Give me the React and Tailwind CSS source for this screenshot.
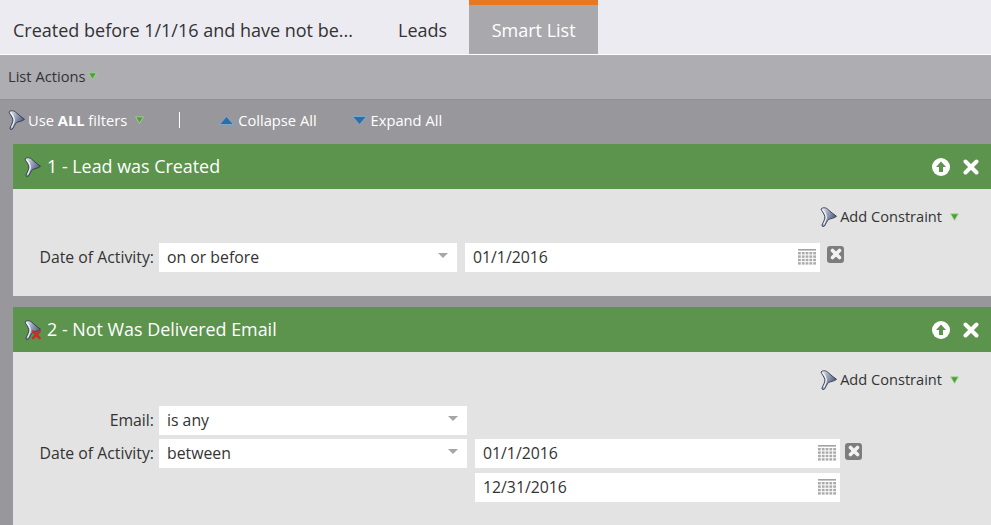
const font = { fontFamily: '"Open Sans", sans-serif' };

function Funnel({ x }) {
  return (
    <svg width="17" height="20" viewBox="0 0 17 20" className="shrink-0">
      <defs>
        <linearGradient id="fg" x1="0" y1="0" x2="1" y2="0.6">
          <stop offset="0" stopColor="#f4f5f8" />
          <stop offset="0.45" stopColor="#9aa5bb" />
          <stop offset="1" stopColor="#46506a" />
        </linearGradient>
      </defs>
      <path d="M1 2 C3 0 6 0.5 8 2.5 C10.5 5 13.5 7 16.5 9.3 C14 11.5 10.5 11.5 8.5 12.5 C7 14 6 16.5 4.5 19 C3.2 20 1.6 19.5 2 18 C3.5 15 5 12 4.8 9.5 C4.3 7 2 4.5 1 2 Z" fill="url(#fg)" stroke="#2f3850" strokeWidth="0.9" />
      <path d="M2.6 2.6 C4.6 4.6 6.2 7 6.4 10 C6.2 12.5 5 15 3.6 17.6" fill="none" stroke="#ffffff" strokeWidth="1.3" opacity="0.85" />
      {x && (
        <g stroke="#c0322b" strokeWidth="2.6" strokeLinecap="round">
          <path d="M9 11.5 L15.5 18" />
          <path d="M15.5 11.5 L9 18" />
        </g>
      )}
    </svg>
  );
}

function GreenCaret() {
  return (
    <svg width="9" height="8" viewBox="0 0 9 8" className="shrink-0">
      <path d="M0.6 0.8 H8.4 L4.5 7.4 Z" fill="#4f9f38" stroke="#a7d89a" strokeWidth="0.8" />
    </svg>
  );
}

function Calendar() {
  return (
    <svg width="18" height="16" viewBox="0 0 18 16" className="shrink-0">
      <rect x="0" y="0" width="18" height="1.6" fill="#a3a3a3" />
      {[3, 6.4, 9.8, 13.2].map((y) =>
        [0, 3.8, 7.6, 11.4, 15.2].map((x) => (
          <rect key={`${x}-${y}`} x={x} y={y} width="2.8" height="2.4" fill="#ababab" />
        ))
      )}
    </svg>
  );
}

function Clear() {
  return (
    <span className="flex h-[17px] w-[17px] items-center justify-center rounded-[3px] bg-[#7d7d7d]">
      <svg width="12" height="12" viewBox="0 0 12 12">
        <path d="M2.5 2.5 L9.5 9.5 M9.5 2.5 L2.5 9.5" stroke="#f2f2f2" strokeWidth="3.6" strokeLinecap="round" />
      </svg>
    </span>
  );
}

function Select({ value, w }) {
  return (
    <div className={`flex h-[29px] items-center justify-between bg-white pl-2 pr-[9px] text-[15.8px] text-[#333] ${w}`}>
      <span>{value}</span>
      <svg width="10" height="5" viewBox="0 0 10 5" className="mb-[3px]">
        <path d="M0 0 H10 L5 5 Z" fill="#a6a6a6" />
      </svg>
    </div>
  );
}

function DateField({ value, w }) {
  return (
    <div className={`flex h-[29px] items-center justify-between bg-white pl-2 pr-[4px] text-[15.8px] text-[#333] ${w}`}>
      <span>{value}</span>
      <Calendar />
    </div>
  );
}

function Label({ children }) {
  return <div className="w-[141px] text-right text-[15.8px] text-[#333]">{children}</div>;
}

function Header({ icon, title }) {
  return (
    <div className="flex h-[45px] items-center bg-[#5c934d] pl-[11px] pr-[12px]">
      {icon}
      <span className="ml-[6px] text-[17.9px] text-white">{title}</span>
      <div className="ml-auto flex items-center gap-[13px]">
        <svg width="18" height="18" viewBox="0 0 18 18">
          <circle cx="9" cy="9" r="9" fill="#fff" />
          <path d="M9 3.6 L14 9 H11 V14 H7 V9 H4 Z" fill="#5c934d" />
        </svg>
        <svg width="16" height="16" viewBox="0 0 16 16">
          <path d="M2.5 2.5 L13.5 13.5 M13.5 2.5 L2.5 13.5" stroke="#fff" strokeWidth="4" strokeLinecap="round" />
        </svg>
      </div>
    </div>
  );
}

function AddConstraint() {
  return (
    <div className="flex items-center justify-end pr-[32px]">
      <Funnel />
      <span className="ml-[3px] text-[14.6px] text-[#333]">Add Constraint</span>
      <span className="ml-[8px]"><GreenCaret /></span>
    </div>
  );
}

export default function App() {
  return (
    <div style={font} className="h-[525px] w-[991px] overflow-hidden bg-[#98979c]">
      <div className="flex h-[55px] items-stretch border-b border-white bg-[#ecebf1]">
        <div className="flex items-center pl-[13px] pt-[6px] text-[18px] text-[#333]">Created before 1/1/16 and have not be...</div>
        <div className="ml-[45px] flex items-center pt-[6px] text-[18px] text-[#333]">Leads</div>
        <div className="ml-[22px] flex w-[129px] items-center justify-center border-t-[5px] border-[#e87722] bg-[#a9a8ad] pt-px text-[18px] text-white">Smart List</div>
      </div>
      <div className="flex h-[44px] items-center bg-[#aeadb2] pb-[2px] pl-[8px] text-[14.7px] text-[#333]">
        <span>List Actions</span>
        <span className="ml-[2px]"><GreenCaret /></span>
      </div>
      <div className="flex h-[45px] items-center border-t border-[#8f8e93] pb-[4px] pl-[8px] text-[14.7px] text-white">
        <Funnel />
        <span className="ml-[3px]">Use <b>ALL</b> filters</span>
        <span className="ml-[8px]"><GreenCaret /></span>
        <span className="ml-[35px] h-[16px] w-px bg-white" />
        <svg width="15" height="9" viewBox="0 0 15 9" className="ml-[39px]">
          <path d="M7.5 0.5 L14.5 8.5 H0.5 Z" fill="#2d6ea5" stroke="#7fb3d9" strokeWidth="0.8" />
        </svg>
        <span className="ml-[4px]">Collapse All</span>
        <svg width="15" height="9" viewBox="0 0 15 9" className="ml-[35px]">
          <path d="M0.5 0.5 H14.5 L7.5 8.5 Z" fill="#2d6ea5" stroke="#7fb3d9" strokeWidth="0.8" />
        </svg>
        <span className="ml-[4px]">Expand All</span>
      </div>
      <div className="ml-[13px]">
        <Header icon={<Funnel />} title="1 - Lead was Created" />
        <div className="h-[107px] bg-[#e3e3e3] pt-[17px]">
          <AddConstraint />
          <div className="mt-[15px] flex items-center">
            <Label>Date of Activity:</Label>
            <div className="ml-[5px]"><Select value="on or before" w="w-[298px]" /></div>
            <div className="ml-[8px]"><DateField value="01/1/2016" w="w-[355px]" /></div>
            <div className="mb-[6px] ml-[7px]"><Clear /></div>
          </div>
        </div>
        <div className="mt-[11px]">
          <Header icon={<Funnel x />} title="2 - Not Was Delivered Email" />
        </div>
        <div className="h-[173px] bg-[#e3e3e3] pt-[17px]">
          <AddConstraint />
          <div className="mt-[15px] flex flex-col gap-[4px]">
            <div className="flex items-center">
              <Label>Email:</Label>
              <div className="ml-[5px]"><Select value="is any" w="w-[308px]" /></div>
            </div>
            <div className="flex items-center">
              <Label>Date of Activity:</Label>
              <div className="ml-[5px]"><Select value="between" w="w-[308px]" /></div>
              <div className="ml-[8px]"><DateField value="01/1/2016" w="w-[365px]" /></div>
              <div className="mb-[4px] ml-[5px]"><Clear /></div>
            </div>
            <div className="ml-[462px] mt-[1px]"><DateField value="12/31/2016" w="w-[365px]" /></div>
          </div>
        </div>
      </div>
    </div>
  );
}
